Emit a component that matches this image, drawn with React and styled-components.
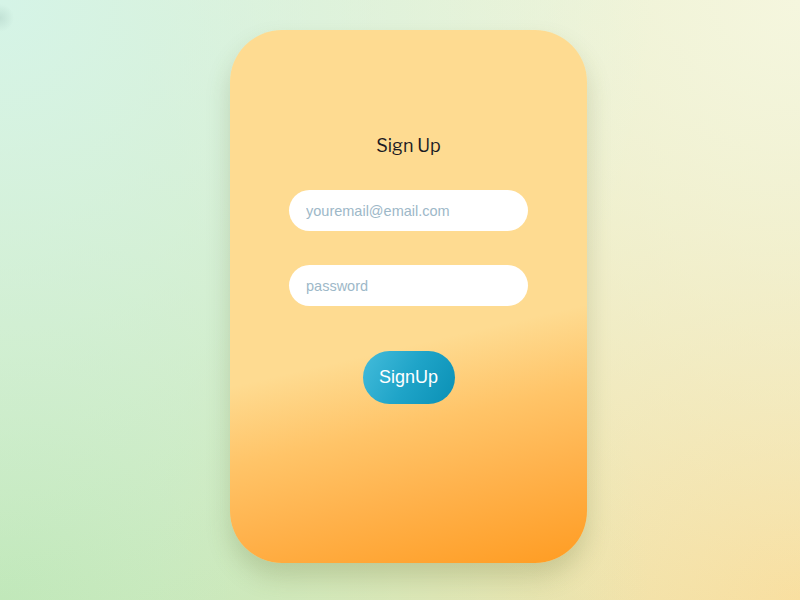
import styled, { createGlobalStyle } from 'styled-components';

const GlobalStyle = createGlobalStyle`
  html, body {
    margin: 0;
    padding: 0;
  }
  body {
    height: 600px;
    overflow: hidden;
    font-family: "Liberation Sans", Arial, sans-serif;
    background:
      radial-gradient(circle at 0 18px, rgba(150, 185, 175, 0.3) 0, rgba(150, 185, 175, 0) 14px),
      radial-gradient(circle at 0 0, #d5f4e7 0, rgba(213, 244, 231, 0) 65%),
      radial-gradient(circle at 100% 0, #f5f6de 0, rgba(245, 246, 222, 0) 65%),
      radial-gradient(circle at 0 100%, #bfe7b6 0, rgba(191, 231, 182, 0) 65%),
      radial-gradient(circle at 100% 100%, #f9dd9b 0, rgba(249, 221, 155, 0) 65%),
      #e2eecb;
  }
`;

const Page = styled.main`
  height: 600px;
  display: flex;
  justify-content: center;
  align-items: flex-start;
  padding: 30px 0 0 17px;
  box-sizing: border-box;
`;

const Card = styled.form`
  width: 357px;
  height: 533px;
  box-sizing: border-box;
  border-radius: 52px;
  padding-top: 103px;
  display: flex;
  flex-direction: column;
  align-items: center;
  background: linear-gradient(167deg, #fedb91 0%, #fedb91 58%, #ffc468 71%, #ffb24c 83%, #ff9c22 100%);
  box-shadow: 0 14px 24px rgba(90, 100, 40, 0.22);
`;

const Title = styled.h2`
  margin: 0 0 32px;
  font-family: "Libre Franklin", "Noto Sans", sans-serif;
  font-weight: 400;
  font-size: 18px;
  line-height: 25px;
  color: #1b1a24;
`;

const Field = styled.input`
  width: 239px;
  height: 41px;
  box-sizing: border-box;
  border: none;
  border-radius: 21px;
  background: #fff;
  padding: 0 17px;
  margin-bottom: ${(p) => p.$gap}px;
  font-family: "Liberation Sans", Arial, sans-serif;
  font-size: 14.5px;
  outline: none;

  &::placeholder {
    color: #9db8c8;
  }
`;

const Button = styled.button`
  width: 92px;
  height: 53px;
  border: none;
  border-radius: 27px;
  background: linear-gradient(120deg, #44bcdb 0%, #1fa4c8 50%, #0a90b5 100%);
  color: #fff;
  font-family: "Liberation Sans", Arial, sans-serif;
  font-size: 18px;
  cursor: pointer;
`;

export default function App() {
  return (
    <>
      <GlobalStyle />
      <Page>
        <Card onSubmit={(e) => e.preventDefault()}>
          <Title>Sign Up</Title>
          <Field type="email" placeholder="youremail@email.com" $gap={34} />
          <Field type="password" placeholder="password" $gap={45} />
          <Button type="submit">SignUp</Button>
        </Card>
      </Page>
    </>
  );
}
